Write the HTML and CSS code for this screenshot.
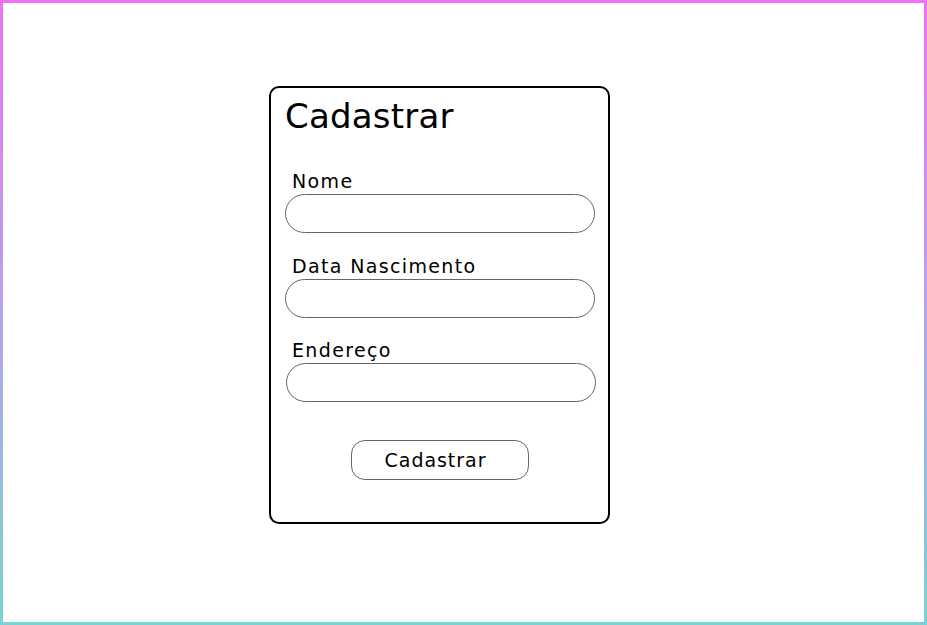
FILE: index.html
```html
<!DOCTYPE html>
<html lang="pt-BR">
<head>
<meta charset="utf-8">
<title>Cadastrar</title>
<link rel="stylesheet" href="styles.css">
</head>
<body>
<main class="page">
  <form class="card">
    <h1 class="title">Cadastrar</h1>
    <div class="field">
      <label class="label" for="nome">Nome</label>
      <input class="input" id="nome" type="text">
    </div>
    <div class="field">
      <label class="label" for="nasc">Data Nascimento</label>
      <input class="input" id="nasc" type="text">
    </div>
    <div class="field">
      <label class="label" for="end">Endereço</label>
      <input class="input input-shift" id="end" type="text">
    </div>
    <div class="actions">
      <button class="button" type="button">Cadastrar</button>
    </div>
  </form>
</main>
</body>
</html>
```
FILE: styles.css
```css
* { box-sizing: border-box; }
html, body { margin: 0; padding: 0; }
body {
  font-family: "DejaVu Sans", "Noto Sans", sans-serif;
  color: #000;
  background: #fff;
}
.page {
  height: 625px;
  border: 3px solid transparent;
  border-image: linear-gradient(to bottom, #f070f8, #b0a8e8 55%, #78d4d4) 1;
  padding: 83px 0 0 266px;
}
.card {
  width: 341px;
  height: 438px;
  border: 2px solid #000;
  border-radius: 10px;
  padding: 8px 13px 0 14px;
  display: flex;
  flex-direction: column;
}
.title {
  margin: 0 0 34px;
  font-size: 34px;
  line-height: 40px;
  font-weight: 400;
  letter-spacing: 0.2px;
}
.field {
  display: flex;
  flex-direction: column;
  gap: 2px;
  margin-bottom: 21.5px;
}
.label {
  padding-left: 7px;
  font-size: 19px;
  line-height: 22px;
  letter-spacing: 1.35px;
}
.input {
  width: 310px;
  height: 39px;
  border: 1px solid #666;
  border-radius: 20px;
  background: #fff;
  font: inherit;
  outline: none;
}
.input-shift { margin-left: 1px; }
.actions {
  display: flex;
  padding-left: 66px;
  margin-top: 16.5px;
}
.button {
  width: 178px;
  height: 40px;
  border: 1px solid #666;
  border-radius: 14px;
  background: #fff;
  font-family: inherit;
  font-size: 19px;
  letter-spacing: 0.95px;
  color: #000;
  padding: 0 9px 0 0;
}
```
